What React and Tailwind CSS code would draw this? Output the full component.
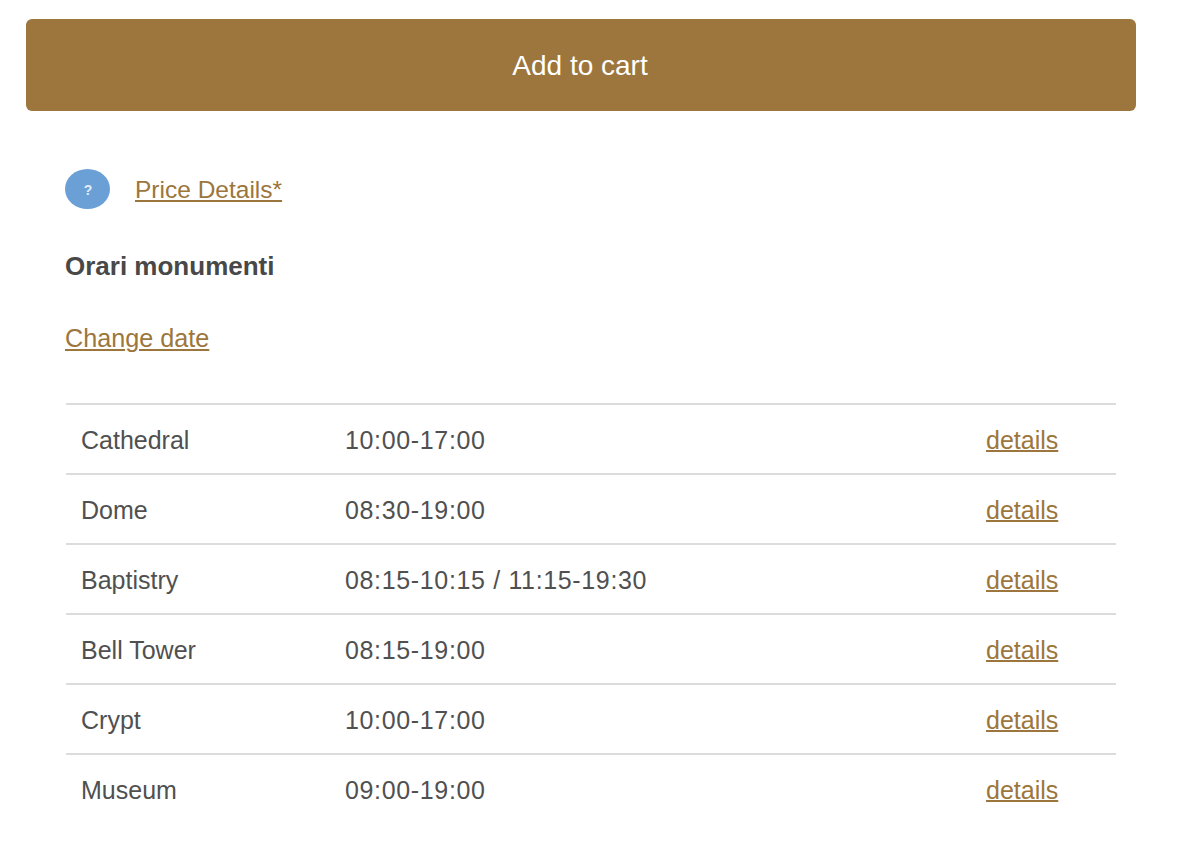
import React from 'react';

const rows = [
  { name: 'Cathedral', hours: '10:00-17:00' },
  { name: 'Dome', hours: '08:30-19:00' },
  { name: 'Baptistry', hours: '08:15-10:15 / 11:15-19:30' },
  { name: 'Bell Tower', hours: '08:15-19:00' },
  { name: 'Crypt', hours: '10:00-17:00' },
  { name: 'Museum', hours: '09:00-19:00' },
];

const linkClass = 'text-[#9c763c] underline decoration-2';

export default function App() {
  return (
    <div className="w-[1192px] h-[868px] overflow-hidden bg-white pt-[19px] pl-[26px] font-['Liberation_Sans',Arial,sans-serif] text-[25px] text-[#505050]">
      {/* Add to cart */}
      <button className="block w-[1110px] h-[92px] pt-[2px] pr-[2px] rounded-[6px] bg-[#9c763c] text-white text-[28px] text-center">
        Add to cart
      </button>

      <div className="pl-[39px]">
        {/* Price details */}
        <div className="flex items-center mt-[58px] h-[40px]">
          <div className="w-[45px] h-[40px] pl-px pt-[2px] rounded-[50%] bg-[#6ba0d6] flex items-center justify-center text-white/80 text-[14px] font-bold">
            ?
          </div>
          <a className={`${linkClass} underline-offset-2 ml-[25px] mt-[3px] text-[24.5px]`}>Price Details*</a>
        </div>

        <h3 className="mt-[37px] h-[40px] leading-[40px] text-[26px] font-bold text-[#484848]">Orari monumenti</h3>

        <div className="mt-[32px] h-[40px] leading-[40px]">
          <a className={`${linkClass} underline-offset-2 text-[25.2px]`}>Change date</a>
        </div>

        {/* Monument hours */}
        <div className="mt-[45px] w-[1050px] ml-px">
          {rows.map(row => (
            <div key={row.name} className="flex items-center h-[70px] pt-[4px] border-t-2 border-[#dcdcdc]">
              <div className="w-[279px] pl-[15px]">{row.name}</div>
              <div className="w-[641px] tracking-[0.65px]">{row.hours}</div>
              <a className={`${linkClass} underline-offset-1`}>details</a>
            </div>
          ))}
        </div>
      </div>
    </div>
  );
}
